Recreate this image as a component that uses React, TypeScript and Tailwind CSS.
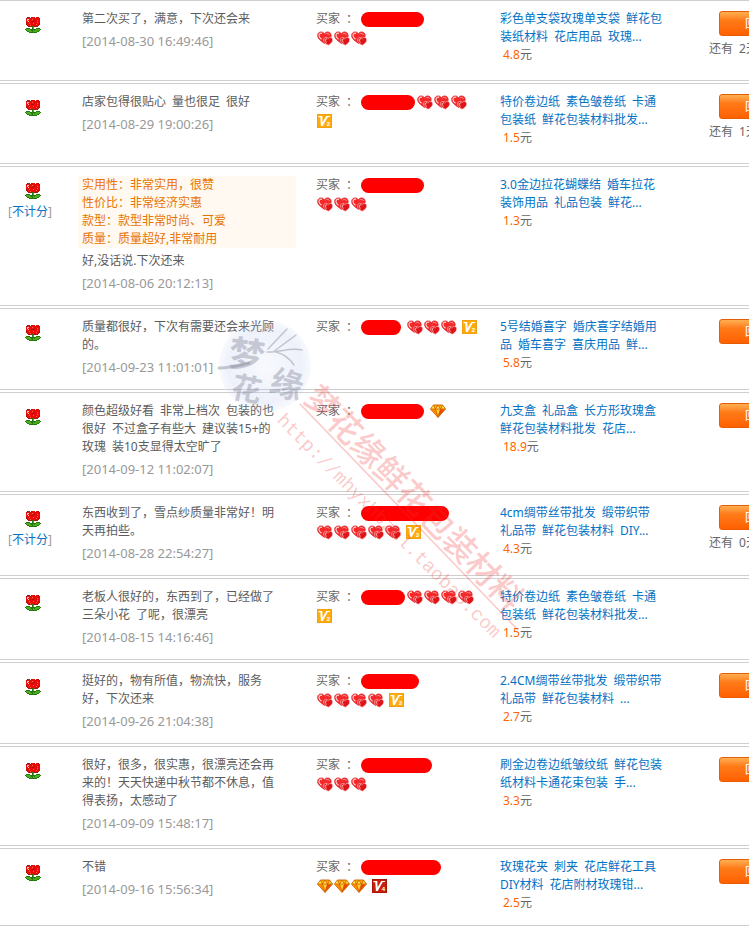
import clsx from "clsx";

type Badge = "heart" | "diamond" | "V2" | "V3" | "V4";

interface Rating {
  id: number;
  comment: string[];
  date: string;
  tags?: string[];
  unscored?: boolean;
  mask: string;
  inline?: Badge[];
  inlineGap?: boolean;
  below?: Badge[];
  product: string[];
  price: string;
  reply?: boolean;
  daysLeft?: number;
}

const hearts = (count: number): Badge[] => Array(count).fill("heart");

const ratings: Rating[] = [
  {
    id: 1,
    comment: ["第二次买了，满意，下次还会来"],
    date: "2014-08-30 16:49:46",
    mask: "w-[63px]",
    below: hearts(3),
    product: ["彩色单支袋玫瑰单支袋 鲜花包", "装纸材料 花店用品 玫瑰..."],
    price: "4.8",
    reply: true,
    daysLeft: 2,
  },
  {
    id: 2,
    comment: ["店家包得很贴心 量也很足 很好"],
    date: "2014-08-29 19:00:26",
    mask: "w-[54px]",
    inline: hearts(3),
    below: ["V2"],
    product: ["特价卷边纸 素色皱卷纸 卡通", "包装纸 鲜花包装材料批发..."],
    price: "1.5",
    reply: true,
    daysLeft: 1,
  },
  {
    id: 3,
    tags: [
      "实用性：非常实用，很赞",
      "性价比：非常经济实惠",
      "款型：款型非常时尚、可爱",
      "质量：质量超好,非常耐用",
    ],
    comment: ["好,没话说.下次还来"],
    date: "2014-08-06 20:12:13",
    unscored: true,
    mask: "w-[63px]",
    below: hearts(3),
    product: ["3.0金边拉花蝴蝶结 婚车拉花", "装饰用品 礼品包装 鲜花..."],
    price: "1.3",
  },
  {
    id: 4,
    comment: ["质量都很好，下次有需要还会来光顾", "的。"],
    date: "2014-09-23 11:01:01",
    mask: "w-10",
    inline: [...hearts(3), "V2"],
    inlineGap: true,
    product: ["5号结婚喜字 婚庆喜字结婚用", "品 婚车喜字 喜庆用品 鲜..."],
    price: "5.8",
    reply: true,
  },
  {
    id: 5,
    comment: [
      "颜色超级好看 非常上档次 包装的也",
      "很好 不过盒子有些大 建议装15+的",
      "玫瑰 装10支显得太空旷了",
    ],
    date: "2014-09-12 11:02:07",
    mask: "w-[63px]",
    inline: ["diamond"],
    inlineGap: true,
    product: ["九支盒 礼品盒 长方形玫瑰盒", "鲜花包装材料批发 花店..."],
    price: "18.9",
    reply: true,
  },
  {
    id: 6,
    comment: ["东西收到了，雪点纱质量非常好！明", "天再拍些。"],
    date: "2014-08-28 22:54:27",
    unscored: true,
    mask: "w-[88px]",
    below: [...hearts(5), "V3"],
    product: ["4cm绸带丝带批发 缎带织带", "礼品带 鲜花包装材料 DIY..."],
    price: "4.3",
    reply: true,
    daysLeft: 0,
  },
  {
    id: 7,
    comment: ["老板人很好的，东西到了，已经做了", "三朵小花 了呢，很漂亮"],
    date: "2014-08-15 14:16:46",
    mask: "w-[44px]",
    inline: hearts(4),
    below: ["V2"],
    product: ["特价卷边纸 素色皱卷纸 卡通", "包装纸 鲜花包装材料批发..."],
    price: "1.5",
  },
  {
    id: 8,
    comment: ["挺好的，物有所值，物流快，服务", "好，下次还来"],
    date: "2014-09-26 21:04:38",
    mask: "w-[58px]",
    below: [...hearts(4), "V3"],
    product: ["2.4CM绸带丝带批发 缎带织带", "礼品带 鲜花包装材料 ..."],
    price: "2.7",
    reply: true,
  },
  {
    id: 9,
    comment: [
      "很好，很多，很实惠，很漂亮还会再",
      "来的！天天快递中秋节都不休息，值",
      "得表扬，太感动了",
    ],
    date: "2014-09-09 15:48:17",
    mask: "w-[71px]",
    below: hearts(3),
    product: ["刷金边卷边纸皱纹纸 鲜花包装", "纸材料卡通花束包装 手..."],
    price: "3.3",
    reply: true,
  },
  {
    id: 10,
    comment: ["不错"],
    date: "2014-09-16 15:56:34",
    mask: "w-20",
    below: ["diamond", "diamond", "diamond", "V4"],
    product: ["玫瑰花夹 刺夹 花店鲜花工具", "DIY材料 花店附材玫瑰钳..."],
    price: "2.5",
    reply: true,
  },
];

// k = dark red, r = red, w = highlight, o = speckle, g = leaf, d = dark leaf
const flowerPixels = [
  "..kkr.krrk.rkk..",
  ".krrrkrrrrkrrrk.",
  ".rwwrrrorrrrrrr.",
  ".rwrrrrrrkrrorr.",
  ".rrwrrkkkrrrrrr.",
  ".rrrrrrrrrrrorr.",
  ".krrorrrorrrrrk.",
  ".krrrrrrrrrorrk.",
  "..krrorrrrrrrk..",
  "...kkkkddkkkk...",
  ".......dg.......",
  ".dddd..dg..dddd.",
  "dggggddddddggggd",
  ".dggggddgdggggd.",
  "..ddgggdggggdd..",
  "....dddddddd....",
];

const flowerColors: Record<string, string> = {
  k: "#a81812",
  r: "#ee0a08",
  w: "#ffc9c4",
  o: "#f86a3c",
  g: "#4fae1e",
  d: "#24780f",
};

const Flower = () => (
  <svg
    className="block"
    width="16"
    height="16"
    viewBox="0 0 16 16"
    shapeRendering="crispEdges"
    role="img"
    aria-label="好评"
  >
    {flowerPixels.flatMap((row, y) =>
      [...row].map((c, x) =>
        c === "." ? null : (
          <rect key={`${x}-${y}`} x={x} y={y} width="1" height="1" fill={flowerColors[c]} />
        )
      )
    )}
  </svg>
);

const Heart = () => (
  <svg className="mr-px block shrink-0" width="16" height="15" viewBox="0 0 16 15">
    <path
      d="M7.500 12.500C3.800 9.900.6 7.600.6 4.500.6 2.300 2.200.9 4.100.9c1.400 0 2.500.6 3.300 1.800C8.200 1.500 9.300.9 10.700.9c2 0 3.500 1.500 3.500 3.600 0 3.100-3.200 5.400-6.700 8z"
      fill="#f5282a"
      stroke="#dc2226"
      strokeWidth=".7"
    />
    <path d="M5.200 2.300C3.300 1.700 1.900 2.900 2 4.700c.1 1.500 1.200 2.500 2.500 3.500" fill="none" stroke="#ffd9d6" strokeWidth="1.100" />
    <path d="M8.600 3c1.400-1.100 3.500-.7 3.900.9" fill="none" stroke="#ff8a85" strokeWidth="1" />
    <path
      d="M11.200 14.300C8.700 12.600 6.500 11.100 6.500 8.900c0-1.500 1.100-2.500 2.400-2.500.9 0 1.800.4 2.300 1.200.5-.8 1.300-1.200 2.200-1.200 1.300 0 2.300 1 2.300 2.500 0 2.200-2 3.700-4.500 5.400z"
      fill="#e01418"
      stroke="#ffd0ce"
      strokeWidth=".6"
    />
    <path d="M10.200 8c-1.200-.5-2.200.2-2.100 1.200.1.900.8 1.500 1.500 2.100" fill="none" stroke="#ffe4e2" strokeWidth=".9" />
  </svg>
);

const Diamond = () => (
  <svg className="mr-px block shrink-0" width="16" height="14" viewBox="0 0 16 14">
    <path d="M3.500 1h9L15.500 5 8 13.500.5 5z" fill="#ffb400" stroke="#c95a00" strokeWidth=".9" />
    <path d="M3.500 1.400 5.500 5H1zM8 1.400 10.500 5h-5z" fill="#ffe95a" />
    <path d="M12.500 1.400 15 5h-4.500z" fill="#ffd23a" />
    <path d="M1.200 5.300h4.300L8 13z" fill="#ff8a00" />
    <path d="M5.500 5.300h5L8 12.800z" fill="#ffcf2a" />
    <path d="M10.500 5.300h4.300L8 13z" fill="#e8480c" />
    <path d="M3.500 1.200 5.500 5 8 1.200 10.500 5l2-3.800M.8 5h14.400M5.500 5 8 13l2.500-8" fill="none" stroke="#d05a00" strokeWidth=".8" />
  </svg>
);

const VipBadge = ({ level }: { level: number }) => (
  <svg className="block shrink-0" width="15" height="14" viewBox="0 0 15 14" role="img" aria-label={`V${level}`}>
    <rect width="15" height="14" fill={level === 4 ? "#a81408" : "#f0a010"} />
    <rect x="1" y="1" width="13" height="12" fill={level === 4 ? "#c8200c" : "#ffab0a"} />
    <path d="M1.500 2h3.800l.3 6.200L9.300 2h4l-.6 1.100h-1.900L5.700 12H3.900L3.300 3.200H1.500z" fill="#fff" />
    <text x="9.800" y="12.300" fill="#fff" fontSize="6" fontWeight="700" fontFamily="Liberation Sans, sans-serif">
      {level}
    </text>
  </svg>
);

const Badges = ({ items }: { items: Badge[] }) => (
  <>
    {items.map((item, i) => {
      if (item === "heart") return <Heart key={i} />;
      if (item === "diamond") return <Diamond key={i} />;
      return (
        <span key={i} className={i > 0 ? "ml-1" : ""}>
          <VipBadge level={Number(item[1])} />
        </span>
      );
    })}
  </>
);

// Words are set apart by a half-width (en) space
const Lines = ({ lines }: { lines: string[] }) => (
  <>
    {lines.map((line) => (
      <span key={line} className="block whitespace-nowrap">
        {line.replace(/ /g, "\u2002")}
      </span>
    ))}
  </>
);

const RatingRow = ({ rating }: { rating: Rating }) => (
  <tr className="align-top [&>td]:border-y [&>td]:border-[#cfcfcf] [&>td]:pt-[9px] [&>td]:pb-[13px]">
    <td className="pl-2">
      <div className="pt-[7px] pl-[17px]">
        <Flower />
      </div>
      {rating.unscored && (
        <div className="mt-1 whitespace-nowrap text-[#999]">
          [
          <a href="#rule" className="text-[#0472c4]">
            不计分
          </a>
          ]
        </div>
      )}
    </td>

    <td className="pr-5">
      {rating.tags && (
        <div className="mb-1 bg-[#fff9f1] pl-1 text-[#e87400]">
          <Lines lines={rating.tags} />
        </div>
      )}
      <div className="pl-1 text-[#5c5c5c]">
        <Lines lines={rating.comment} />
      </div>
      <div className="mt-1 pl-1 text-[13px] leading-[18px] text-[#999]">[{rating.date}]</div>
    </td>

    <td>
      <div className="flex h-[18px] items-center whitespace-nowrap">
        <span>买家{"\u2002"}：</span>
        <span className={clsx("ml-[3px] h-[15px] shrink-0 rounded-full bg-[#ff0000]", rating.mask)} />
        {rating.inline && (
          <span className={clsx("flex items-center", rating.inlineGap ? "ml-[6px]" : "ml-[2px]")}>
            <Badges items={rating.inline} />
          </span>
        )}
      </div>
      {rating.below && (
        <div className="flex h-5 items-center pl-px">
          <Badges items={rating.below} />
        </div>
      )}
    </td>

    <td>
      <a href="#item" className="block text-[#0472c4]">
        <Lines lines={rating.product} />
      </a>
      <div className="pl-[3px]">
        <span className="text-[#ff6600]">{rating.price}</span>元
      </div>
    </td>

    <td>
      {rating.reply && (
        <div className="pt-px pl-[10px]">
          <button
            type="button"
            className="block h-[25px] w-[76px] rounded-[3px] border border-[#e85d04] bg-linear-to-b from-[#ffb050] via-[#ff7a18] via-35% to-[#ff6000] text-center text-white"
          >
            回复
          </button>
        </div>
      )}
      {rating.daysLeft !== undefined && (
        <div className="mt-1 mb-[9px] whitespace-nowrap">
          还有{"\u2002"}
          {rating.daysLeft}天
        </div>
      )}
    </td>
  </tr>
);

const Watermark = () => (
  <svg
    className="pointer-events-none absolute top-[310px] left-[210px]"
    width="330"
    height="350"
    viewBox="210 310 330 350"
    aria-hidden="true"
  >
    <defs>
      <radialGradient id="halo">
        <stop offset="0" stopColor="#b9c6ee" stopOpacity=".1" />
        <stop offset=".8" stopColor="#b9c6ee" stopOpacity=".24" />
        <stop offset="1" stopColor="#b9c6ee" stopOpacity=".1" />
      </radialGradient>
    </defs>
    <circle cx="265" cy="366" r="46" fill="url(#halo)" />
    <g fill="#85899a" fillOpacity=".42" fontFamily="Noto Sans CJK SC, sans-serif" fontWeight="700">
      <text x="229" y="368" fontSize="36" transform="rotate(8 247 353)">梦</text>
      <text x="232" y="400" fontSize="30" transform="rotate(12 248 388)">花</text>
      <text x="270" y="396" fontSize="33" transform="rotate(16 285 385)">缘</text>
    </g>
    <g fill="none" stroke="#85899a" strokeOpacity=".45" strokeWidth="1.500" strokeLinecap="round">
      <path d="M268 349 287 329M273 352 296 335M267 352c11 1 22-5 35-2M276 352c8 2 14 7 18 13" />
      <path d="M219 368c8 0 18-2 30-5" strokeWidth="3" />
    </g>
    <g fill="#f03030" fillOpacity=".27">
      <text
        transform="translate(311 391) rotate(46)"
        fontSize="33"
        fontWeight="500"
        fontFamily="Noto Sans CJK SC, sans-serif"
        y="12"
      >
        梦花缘鲜花包装材料
      </text>
      <text transform="translate(278 419) rotate(45)" fontSize="19" fontFamily="Liberation Mono, monospace" y="3">
        http://mhyxhbzcl.taobao.com
      </text>
    </g>
    <path d="M300 404 518 630" stroke="#f03030" strokeOpacity=".27" strokeWidth="1.500" />
  </svg>
);

const App = () => {
  return (
    <main className="relative overflow-hidden bg-white font-['Noto_Sans','Noto_Sans_CJK_SC',sans-serif] text-[12px] leading-[18px] text-[#666]">
      <table className="w-full min-w-[809px] table-fixed border-separate border-spacing-x-0 border-spacing-y-[2px] -mt-[2px]">
        <colgroup>
          <col className="w-[78px]" />
          <col />
          <col className="w-[184px]" />
          <col className="w-[209px]" />
          <col className="w-[100px]" />
        </colgroup>
        <tbody>
          {ratings.map((rating) => (
            <RatingRow key={rating.id} rating={rating} />
          ))}
        </tbody>
      </table>
      <Watermark />
    </main>
  );
};

export default App;
